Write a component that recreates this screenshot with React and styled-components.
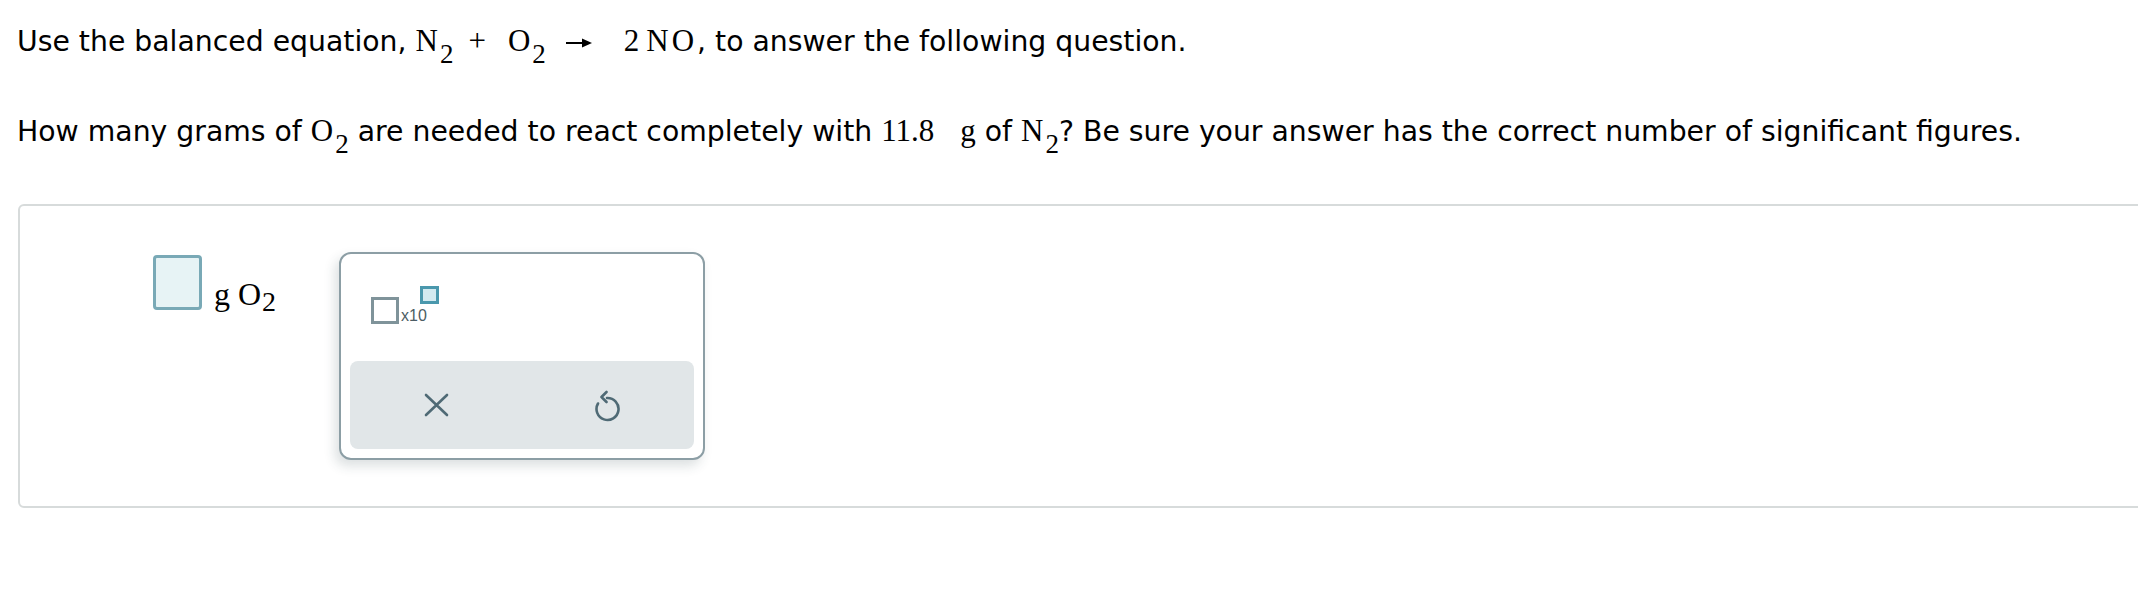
import styled, { createGlobalStyle } from "styled-components";

const GlobalStyle = createGlobalStyle`
  html, body {
    margin: 0;
    padding: 0;
    background: #ffffff;
    overflow: hidden;
  }
  body {
    font-family: "DejaVu Sans", Verdana, sans-serif;
    color: #000000;
  }
`;

const App = () => {
  return (
    <Page>
      <GlobalStyle />
      <Prompt>
        Use the balanced equation,{" "}
        <M $ls={1}>
          N<Sub>2</Sub>
        </M>
        <Op>+</Op>
        <M $ls={1}>
          O<Sub>2</Sub>
        </M>
        <Arrow width="26" height="10" viewBox="0 0 26 10">
          <line x1="0" y1="5" x2="18" y2="5" stroke="#000" strokeWidth="2" />
          <polygon points="26,5 16,0.5 16,9.5" fill="#000" />
        </Arrow>
        <M $ml={32}>2</M>
        <M $ml={7} $ls={3}>
          NO
        </M>
        , to answer the following question.
      </Prompt>
      <Prompt>
        How many grams of{" "}
        <M $ls={1}>
          O<Sub>2</Sub>
        </M>{" "}
        are needed to react completely with <M>11.8</M>
        <M $ml={26}>g</M> of{" "}
        <M $ls={1}>
          N<Sub>2</Sub>
        </M>
        ? Be sure your answer has the correct number of significant figures.
      </Prompt>

      <Card>
        <AnswerGroup>
          <AnswerBox />
          <UnitLabel>
            g O<UnitSub>2</UnitSub>
          </UnitLabel>
        </AnswerGroup>

        <Popup>
          <PopupTop>
            <ExpWidget>
              <BaseBox />
              <Times>x10</Times>
              <PowerBox />
            </ExpWidget>
          </PopupTop>
          <ActionBar>
            <ActionButton aria-label="clear">
              <svg width="25" height="24" viewBox="0 0 25 24">
                <path
                  d="M2 2 L23 22 M23 2 L2 22"
                  stroke="#4f6a75"
                  strokeWidth="2.6"
                  strokeLinecap="round"
                  fill="none"
                />
              </svg>
            </ActionButton>
            <ActionButton aria-label="undo">
              <svg width="28" height="34" viewBox="0 0 28 34">
                <path
                  d="M4 15.5 A11 11 0 1 0 13 10 M12.5 4 L7.5 9 L12.5 14"
                  stroke="#4f6a75"
                  strokeWidth="2.6"
                  strokeLinecap="round"
                  strokeLinejoin="round"
                  fill="none"
                />
              </svg>
            </ActionButton>
          </ActionBar>
        </Popup>
      </Card>
    </Page>
  );
};

const Page = styled.div`
  padding: 22px 0 0 17px;
`;

const Prompt = styled.p`
  margin: 0;
  font-size: 28.3px;
  line-height: 40px;
  white-space: nowrap;

  & + & {
    margin-top: 50px;
  }
`;

const M = styled.span`
  font-family: "Liberation Serif", "Times New Roman", serif;
  font-size: 31px;
  line-height: 1;
  letter-spacing: ${(props) => props.$ls || 0}px;
  margin-left: ${(props) => props.$ml || 0}px;
`;

const Sub = styled.span`
  font-size: 27px;
  line-height: 0;
  letter-spacing: 0;
  vertical-align: -12px;
  margin-left: 1px;
`;

const Op = styled.span`
  font-family: "Liberation Serif", "Times New Roman", serif;
  font-size: 31px;
  line-height: 1;
  margin: 0 22px 0 15px;
`;

const Arrow = styled.svg`
  vertical-align: 3px;
  margin-left: 20px;
`;

const Card = styled.div`
  margin: 52px 0 0 1px;
  width: 2200px;
  height: 304px;
  box-sizing: border-box;
  border: 2px solid #d7dbdb;
  border-radius: 6px;
  padding: 46px 0 0 133px;
  display: flex;
  align-items: flex-start;
`;

const AnswerGroup = styled.div`
  width: 186px;
  display: flex;
  align-items: flex-start;
`;

const AnswerBox = styled.div`
  width: 49px;
  height: 55px;
  margin-top: 3px;
  box-sizing: border-box;
  border: 3px solid #79a9b6;
  border-radius: 4px;
  background: #e7f3f5;
`;

const UnitLabel = styled.div`
  margin: 22px 0 0 12px;
  font-family: "Liberation Serif", "Times New Roman", serif;
  font-size: 32px;
  line-height: 40px;
  white-space: nowrap;
`;

const UnitSub = styled.span`
  display: inline-block;
  font-size: 28px;
  line-height: 28px;
  transform: translateY(6px);
  margin-left: 1px;
`;

const Popup = styled.div`
  width: 366px;
  height: 208px;
  box-sizing: border-box;
  border: 2px solid #8c9ea5;
  border-radius: 12px;
  background: #ffffff;
  box-shadow: -4px 6px 12px rgba(40, 60, 70, 0.16);
  padding: 0 9px 9px;
  display: flex;
  flex-direction: column;
`;

const PopupTop = styled.div`
  flex: 1;
  padding: 32px 0 0 21px;
`;

const ExpWidget = styled.div`
  display: flex;
  align-items: flex-start;
`;

const BaseBox = styled.div`
  width: 28px;
  height: 27px;
  margin-top: 11px;
  box-sizing: border-box;
  border: 3px solid #7f939a;
  background: #ffffff;
`;

const Times = styled.span`
  margin: 22px 0 0 2px;
  font-family: "Liberation Sans", Arial, sans-serif;
  font-size: 16px;
  line-height: 16px;
  color: #4c5d64;
`;

const PowerBox = styled.div`
  width: 19px;
  height: 18px;
  margin-left: -7px;
  box-sizing: border-box;
  border: 3px solid #4a98ad;
  background: #d3eaf0;
`;

const ActionBar = styled.div`
  height: 88px;
  border-radius: 8px;
  background: #e1e6e8;
  display: flex;
`;

const ActionButton = styled.button`
  flex: 1;
  display: flex;
  align-items: center;
  justify-content: center;
  border: none;
  background: transparent;
  padding: 0;
  cursor: pointer;
`;

export default App;
